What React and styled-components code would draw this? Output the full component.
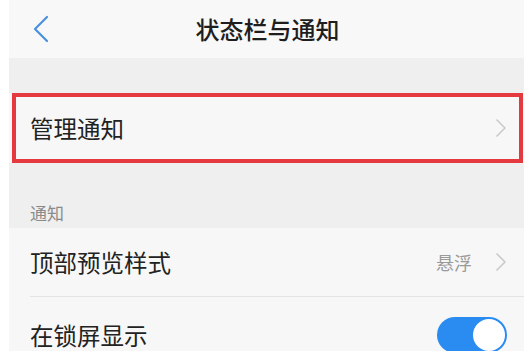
import React from "react";
import styled, { createGlobalStyle } from "styled-components";

const Global = createGlobalStyle`
  html, body { margin: 0; padding: 0; background: #ffffff; }
  body { font-family: "Noto Sans CJK SC", "Noto Sans", sans-serif; }
  * { box-sizing: border-box; }
`;

const Page = styled.div`
  width: 524px;
  height: 351px;
  overflow: hidden;
  padding-left: 9px;
  background: #ffffff;
`;

const Screen = styled.div`
  display: flex;
  flex-direction: column;
  background: #f7f7f7;
`;

const Header = styled.header`
  height: 58px;
  display: grid;
  grid-template-columns: 80px 1fr 80px;
  align-items: center;
  background: #f8f8f8;
`;

const BackButton = styled.button`
  justify-self: start;
  margin-left: 22px;
  width: 20px;
  height: 30px;
  padding: 0;
  border: none;
  background: none;
  display: flex;
  align-items: center;
  justify-content: center;
`;

const Title = styled.h1`
  margin: 0;
  text-align: center;
  font-size: 24px;
  font-weight: 500;
  color: #1e1e1e;
  line-height: 30px;
  padding-left: 2px;
`;

const Band = styled.div`
  height: ${(p) => p.$h}px;
  background: #efefef;
  display: flex;
  align-items: flex-end;
  padding: 0 0 4px 21px;
`;

const BandLabel = styled.span`
  font-size: 17px;
  color: #8a8a8a;
  line-height: 22px;
`;

const Row = styled.div`
  height: ${(p) => p.$h}px;
  display: flex;
  align-items: center;
  justify-content: space-between;
  background: #f7f7f7;
  padding: 0 18px 0 21px;
  ${(p) =>
    p.$highlight &&
    `
    margin: 0 1px 0 3px;
    border: 4px solid #e43a3f;
    padding: 0 13px 0 14px;
  `}
`;

const RowLabel = styled.span`
  font-size: 23.5px;
  color: #222222;
  line-height: 30px;
`;

const RowRight = styled.div`
  display: flex;
  align-items: center;
  gap: 24px;
`;

const RowValue = styled.span`
  font-size: 18px;
  color: #9a9a9a;
  line-height: 24px;
`;

const Divider = styled.div`
  height: 1px;
  background: #e4e4e4;
  margin-left: 21px;
`;

const Toggle = styled.div`
  width: 70px;
  height: 36px;
  border-radius: 18px;
  background: #2a8cf0;
  display: flex;
  align-items: center;
  justify-content: flex-end;
  padding: 0 2px;
  margin-right: -1px;
`;

const Knob = styled.div`
  width: 32px;
  height: 32px;
  border-radius: 50%;
  background: #ffffff;
`;

const Chevron = ({ color = "#c9c9c9", w = 10, h = 18, sw = 1.6 }) => (
  <svg width={w} height={h} viewBox={`0 0 ${w} ${h}`} fill="none">
    <path
      d={`M1 1 L${w - 1} ${h / 2} L1 ${h - 1}`}
      stroke={color}
      strokeWidth={sw}
      strokeLinecap="round"
      strokeLinejoin="round"
    />
  </svg>
);

const BackIcon = () => (
  <svg width="18" height="28" viewBox="0 0 18 28" fill="none">
    <path
      d="M15 2 L3 14 L15 26"
      stroke="#4a90dc"
      strokeWidth="2.2"
      strokeLinecap="round"
      strokeLinejoin="round"
    />
  </svg>
);

export default function App() {
  return (
    <>
      <Global />
      <Page>
        <Screen>
          <Header>
            <BackButton aria-label="返回">
              <BackIcon />
            </BackButton>
            <Title>状态栏与通知</Title>
            <span />
          </Header>
          <Band $h={35} />
          <Row $h={70} $highlight>
            <RowLabel>管理通知</RowLabel>
            <Chevron />
          </Row>
          <Band $h={65}>
            <BandLabel>通知</BandLabel>
          </Band>
          <Row $h={68}>
            <RowLabel>顶部预览样式</RowLabel>
            <RowRight>
              <RowValue>悬浮</RowValue>
              <Chevron />
            </RowRight>
          </Row>
          <Divider />
          <Row $h={76}>
            <RowLabel>在锁屏显示</RowLabel>
            <Toggle>
              <Knob />
            </Toggle>
          </Row>
        </Screen>
      </Page>
    </>
  );
}
